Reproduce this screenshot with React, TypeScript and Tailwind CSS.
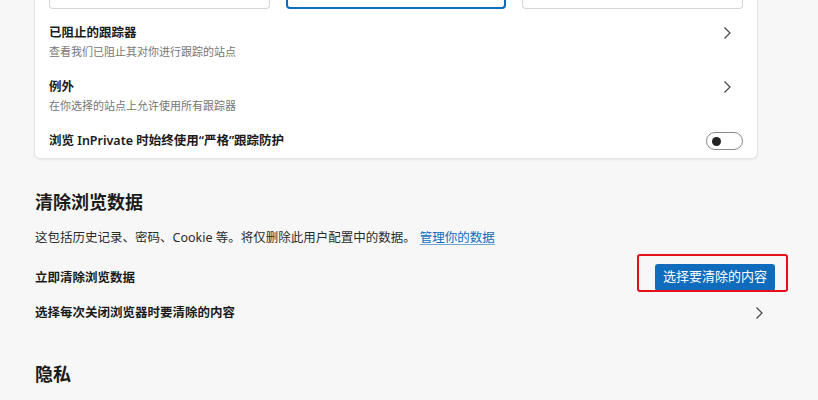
import React from 'react';

function Chevron() {
  return (
    <svg width="9" height="14" viewBox="0 0 9 14" className="shrink-0">
      <path d="M1.5 1.5 7 7l-5.5 5.5" fill="none" stroke="#444" strokeWidth="1.2" />
    </svg>
  );
}

function Toggle() {
  return (
    <div className="w-[37px] h-[18px] rounded-full border border-[#8a8a8a] bg-white flex items-center pl-[5px]">
      <span className="w-[9px] h-[9px] rounded-full bg-[#222]" />
    </div>
  );
}

export default function App() {
  return (
    <div className="w-[818px] h-[400px] overflow-hidden bg-[#f7f7f7] text-[#1b1b1b] font-['Noto_Sans','Noto_Sans_CJK_SC',sans-serif]">
      {/* 跟踪防护卡片 */}
      <div className="ml-[34px] w-[724px] bg-white border-x border-b border-[#e5e5e5] rounded-b-[6px] shadow-[0_1px_2px_rgba(0,0,0,0.06)] px-[14px] pb-[8px]">
        <div className="flex gap-[16px] h-[9px]">
          <div className="w-[221px] bg-white border-x border-b border-[#d6d6d6] rounded-b-[4px]" />
          <div className="w-[220px] bg-white border-x-2 border-b-2 border-[#0f6cbd] rounded-b-[4px]" />
          <div className="w-[221px] bg-white border-x border-b border-[#d6d6d6] rounded-b-[4px]" />
        </div>

        <div className="mt-[15px] flex justify-between items-start">
          <div>
            <div className="text-[12.5px] leading-[18px] font-semibold">已阻止的跟踪器</div>
            <div className="mt-[2px] text-[11px] leading-[16px] text-[#767676]">查看我们已阻止其对你进行跟踪的站点</div>
          </div>
          <div className="mt-[2px] mr-[11px]"><Chevron /></div>
        </div>

        <div className="mt-[18px] flex justify-between items-start">
          <div>
            <div className="text-[12.5px] leading-[18px] font-semibold">例外</div>
            <div className="mt-[2px] text-[11px] leading-[16px] text-[#767676]">在你选择的站点上允许使用所有跟踪器</div>
          </div>
          <div className="mt-[2px] mr-[11px]"><Chevron /></div>
        </div>

        <div className="mt-[18px] h-[18px] flex justify-between items-center">
          <div className="text-[12.5px] leading-[18px] font-semibold">浏览 InPrivate 时始终使用“严格”跟踪防护</div>
          <Toggle />
        </div>
      </div>

      {/* 清除浏览数据 */}
      <div className="pl-[35px] pr-[43px]">
        <h2 className="mt-[31px] text-[18px] leading-[24px] font-semibold">清除浏览数据</h2>
        <p className="mt-[14px] text-[12.5px] leading-[20px] text-[#2b2b2b]">
          这包括历史记录、密码、Cookie 等。将仅删除此用户配置中的数据。
          <a className="ml-[4px] text-[#0f6cbd] underline underline-offset-2 decoration-[#6ea6d8]">管理你的数据</a>
        </p>

        <div className="mt-[15px] h-[28px] flex justify-between items-center">
          <span className="text-[12.5px] font-semibold pt-[2px]">立即清除浏览数据</span>
          <div className="relative">
            <button className="w-[120px] h-[27px] bg-[#0f6cbd] text-white text-[13px] rounded-[3px]">选择要清除的内容</button>
            <span className="absolute -left-[18px] -top-[9px] w-[151px] h-[38px] border-2 border-[#e3101c] rounded-[3px]" />
          </div>
        </div>

        <div className="mt-[12px] h-[20px] flex justify-between items-center">
          <span className="text-[12.5px] font-semibold">选择每次关闭浏览器时要清除的内容</span>
          <div className="mr-[11px]"><Chevron /></div>
        </div>

        <h2 className="mt-[39px] text-[18px] leading-[24px] font-semibold">隐私</h2>
      </div>
    </div>
  );
}
